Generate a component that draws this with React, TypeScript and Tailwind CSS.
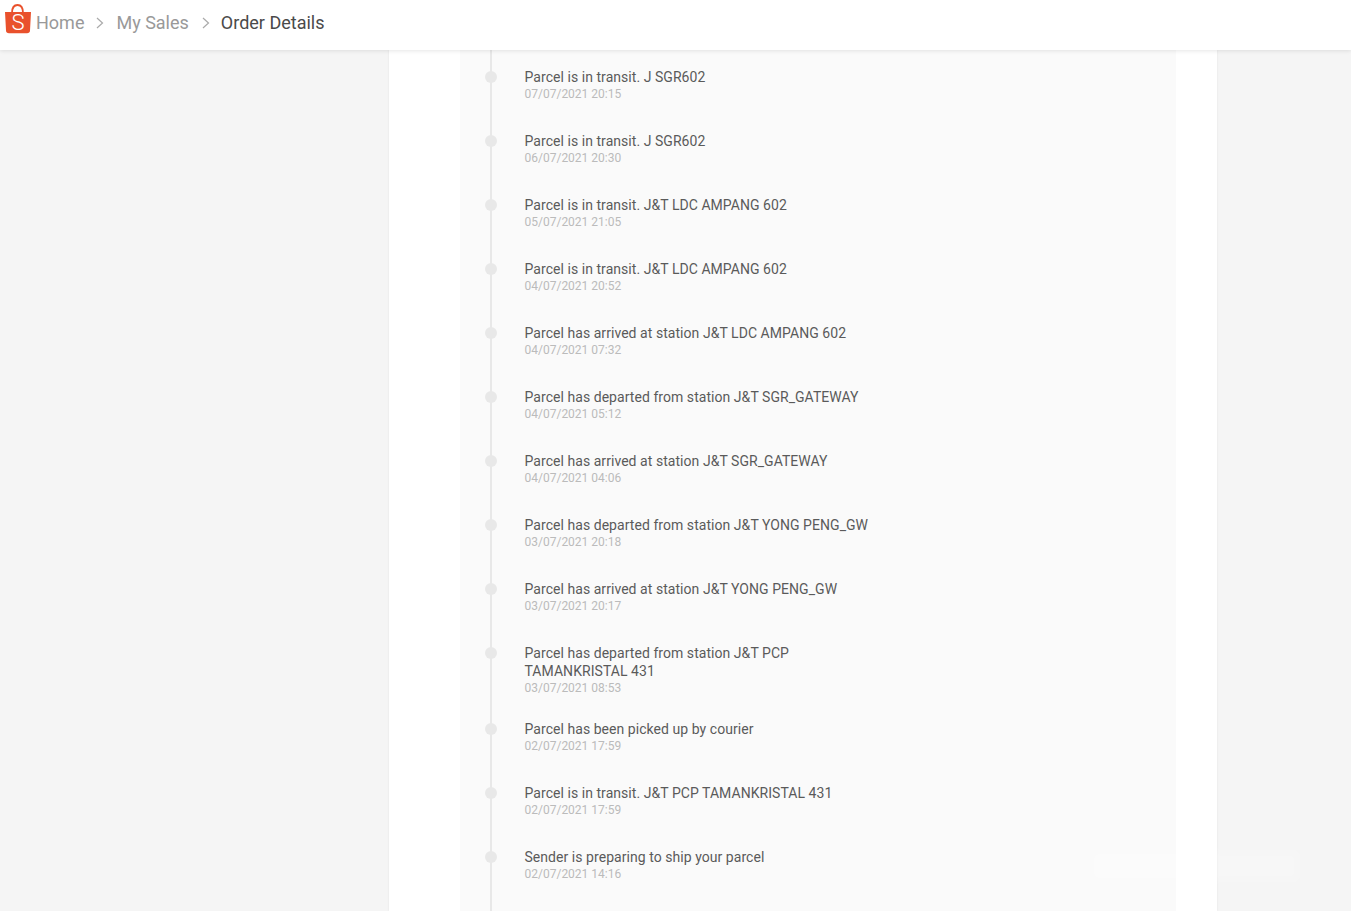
import React from "react";

const events: [string, string][] = [
  ["Parcel is in transit. J SGR602", "07/07/2021 20:15"],
  ["Parcel is in transit. J SGR602", "06/07/2021 20:30"],
  ["Parcel is in transit. J&T LDC AMPANG 602", "05/07/2021 21:05"],
  ["Parcel is in transit. J&T LDC AMPANG 602", "04/07/2021 20:52"],
  ["Parcel has arrived at station J&T LDC AMPANG 602", "04/07/2021 07:32"],
  ["Parcel has departed from station J&T SGR_GATEWAY", "04/07/2021 05:12"],
  ["Parcel has arrived at station J&T SGR_GATEWAY", "04/07/2021 04:06"],
  ["Parcel has departed from station J&T YONG PENG_GW", "03/07/2021 20:18"],
  ["Parcel has arrived at station J&T YONG PENG_GW", "03/07/2021 20:17"],
  ["Parcel has departed from station J&T PCP TAMANKRISTAL 431", "03/07/2021 08:53"],
  ["Parcel has been picked up by courier", "02/07/2021 17:59"],
  ["Parcel is in transit. J&T PCP TAMANKRISTAL 431", "02/07/2021 17:59"],
  ["Sender is preparing to ship your parcel", "02/07/2021 14:16"],
];

function Logo() {
  return (
    <svg width="27" height="30" viewBox="0 0 27 30" className="shrink-0 mt-[-6px]">
      <path d="M8 9 C8 3.5 10.5 1 13.5 1 C16.5 1 19 3.5 19 9" fill="none" stroke="#e9512c" strokeWidth="1.8" />
      <path d="M1 8 H27 L26 26.5 C26 28.2 24.8 29.3 23 29.3 H5 C3.2 29.3 2 28.2 2 26.5 Z" fill="#e9512c" />
      <text x="14" y="26" textAnchor="middle" fontSize="22" fill="#ffffff" fontFamily="Roboto, sans-serif" fontWeight="300">S</text>
    </svg>
  );
}

function Chevron() {
  return (
    <svg width="8" height="12" viewBox="0 0 8 12" className="shrink-0">
      <path d="M1 1 L6.5 6 L1 11" fill="none" stroke="#aaaaaa" strokeWidth="1.2" />
    </svg>
  );
}

export default function App() {
  return (
    <div className="relative h-screen overflow-hidden flex flex-col bg-[#f5f5f5] font-['Roboto',sans-serif]">
      <header className="relative z-10 h-[50px] shrink-0 bg-white shadow-[0_1px_4px_rgba(0,0,0,0.1)] flex items-center pl-[4px] pb-[6px] text-[18px]">
        <Logo />
        <span className="ml-[5px] text-[#999999]">Home</span>
        <span className="ml-[12px] mr-[12px] mt-[2px]"><Chevron /></span>
        <span className="text-[#999999]">My Sales</span>
        <span className="ml-[13px] mr-[11px] mt-[2px]"><Chevron /></span>
        <span className="text-[#4a4a4a]">Order Details</span>
      </header>
      <main className="flex-1 min-h-0 w-[828px] ml-[389px] bg-white pl-[71px] pr-[41px] shadow-[0_0_2px_rgba(0,0,0,0.08)]">
        <div className="h-full bg-[#fafafa] pl-[30px]">
          <ol className="h-full border-l-2 border-[#e8e8e8] pt-[18px] pl-[32.5px]">
            {events.map(([title, date], i) => (
              <li key={i} className="relative min-h-[64px] pb-[24px] w-[352px]">
                <span className="absolute left-[-39.5px] top-[3px] w-[12px] h-[12px] rounded-full bg-[#e8e8e8]" />
                <div className="text-[14px] leading-[18px] tracking-[0.05px] text-[#5a5a5a]">{title}</div>
                <div className="text-[12px] leading-[16px] text-[#bbbbbb]">{date}</div>
              </li>
            ))}
          </ol>
        </div>
      </main>
      <div className="absolute left-[1090px] top-[850px] w-[210px] h-[32px] bg-white/20 blur-[4px]" />
    </div>
  );
}
